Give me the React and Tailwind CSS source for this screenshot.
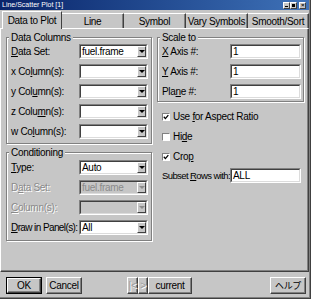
const sans = "font-['Liberation_Sans',Arial,sans-serif]";

function U({ children }) {
  return <span className="underline underline-offset-1">{children}</span>;
}

function DropButton({ disabled }) {
  return (
    <div className="flex h-full w-[9px] shrink-0 items-center justify-center border border-t-white border-l-white border-r-[#404040] border-b-[#404040] bg-[#c6c6c6]">
      <div
        className={`h-0 w-0 border-x-[3px] border-t-[3px] border-x-transparent ${
          disabled ? "border-t-[#8a8a8a]" : "border-t-black"
        }`}
      />
    </div>
  );
}

function Sunken({ value, select, disabled, width = "w-[69px]" }) {
  return (
    <div className={`h-[15px] ${width} shrink-0 border border-t-[#808080] border-l-[#808080] border-r-white border-b-white`}>
      <div
        className={`flex h-full items-center border border-t-[#404040] border-l-[#404040] border-r-[#dcdcdc] border-b-[#dcdcdc] ${
          disabled ? "bg-[#c6c6c6]" : "bg-white"
        }`}
      >
        <span
          className={`flex-1 truncate pl-px text-[10px] leading-[11px] ${
            disabled ? "text-[#8a8a8a]" : "text-black"
          }`}
        >
          {value}
        </span>
        {select ? <DropButton disabled={disabled} /> : null}
      </div>
    </div>
  );
}

function Row({ label, disabled, labelClass = "text-[10px]", children }) {
  return (
    <div className="flex h-[15px] items-center">
      <div
        className={`w-[68px] shrink-0 leading-[11px] ${labelClass} ${
          disabled ? "text-[#8a8a8a] [text-shadow:1px_1px_0_#fff]" : ""
        }`}
      >
        {label}
      </div>
      {children}
    </div>
  );
}

function Group({ title, className = "", children }) {
  return (
    <fieldset
      className={`border border-[#808080] shadow-[inset_1px_1px_0_#fff,1px_1px_0_#fff] ${className}`}
    >
      <legend className="ml-[-2px] bg-[#c6c6c6] px-[2px] text-[10px] leading-[11px]">
        {title}
      </legend>
      {children}
    </fieldset>
  );
}

function Check({ checked, children }) {
  return (
    <div className="flex h-[11px] items-center gap-[3px] text-[10px] leading-[11px]">
      <div className="flex size-[8px] items-center justify-center border border-t-[#808080] border-l-[#808080] border-r-white border-b-white bg-white">
        {checked ? (
          <svg viewBox="0 0 6 6" className="size-[6px]">
            <path d="M0.8 2.8 L2.4 4.6 L5.3 1.2" stroke="black" strokeWidth="1.3" fill="none" />
          </svg>
        ) : null}
      </div>
      <span>{children}</span>
    </div>
  );
}

function Button({ children, isDefault, disabled, width, className = "" }) {
  return (
    <div className={`h-[17px] ${width} ${isDefault ? "border border-black" : ""} ${className}`}>
      <div
        className={`flex h-full items-center justify-center border border-t-white border-l-white border-r-[#404040] border-b-[#404040] shadow-[inset_-1px_-1px_0_#808080] text-[10px] leading-[11px] ${
          disabled ? "text-[#9a9a9a] [text-shadow:1px_1px_0_#fff]" : ""
        }`}
      >
        {children}
      </div>
    </div>
  );
}

function TitleBar() {
  return (
    <div className="flex h-[10px] items-center bg-gradient-to-r from-[#0a246a] to-[#3f72b8] pl-[2px] pr-[3px]">
      <span className="flex-1 text-[7px] leading-[10px] tracking-normal text-white">Line/Scatter Plot [1]</span>
      <div className="flex items-center">
        <div className="flex h-[7px] w-[7px] items-end justify-center border border-t-white border-l-white border-r-[#404040] border-b-[#404040] bg-[#c6c6c6] pb-px">
          <div className="h-px w-[3px] bg-black" />
        </div>
        <div className="flex h-[7px] w-[7px] items-center justify-center border border-t-white border-l-white border-r-[#404040] border-b-[#404040] bg-[#c6c6c6]">
          <div className="h-[3px] w-[3px] border border-black border-t-2" />
        </div>
        <div className="ml-[2px] flex h-[7px] w-[7px] items-center justify-center border border-t-white border-l-white border-r-[#404040] border-b-[#404040] bg-[#c6c6c6] text-[6px] leading-[6px] font-bold">
          ×
        </div>
      </div>
    </div>
  );
}

const tabs = [
  { label: "Line", width: "w-[62px]" },
  { label: "Symbol", width: "w-[62px]" },
  { label: "Vary Symbols", width: "w-[62px]" },
  { label: "Smooth/Sort", width: "w-[61px]" },
];

function Tabs() {
  return (
    <div className="flex h-[18px] items-end pl-[2px]">
      <div className="relative z-10 mb-[-1px] flex h-[18px] w-[60px] items-center justify-center border-t border-l border-r border-t-white border-l-white border-r-[#404040] bg-[#c6c6c6] pb-px text-[10px] leading-[11px]">
        Data to Plot
      </div>
      {tabs.map((tab) => (
        <div
          key={tab.label}
          className={`flex h-[15px] ${tab.width} items-center justify-center border-t border-r border-t-white border-r-[#404040] shadow-[inset_-1px_0_0_#808080] text-[10px] leading-[11px]`}
        >
          {tab.label}
        </div>
      ))}
    </div>
  );
}

function Panel() {
  return (
    <div className="flex h-[244px] border border-t-white border-l-white border-r-[#404040] border-b-[#404040] pl-[5px] pt-[3px] shadow-[inset_-1px_-1px_0_#808080]">
      <div className="mr-[5px] flex w-[146px] flex-col">
        <Group title="Data Columns" className="pb-[4px] pl-[4px] pt-px">
          <div className="flex flex-col gap-[5px]">
            <Row label={<><U>D</U>ata Set:</>}>
              <Sunken value="fuel.frame" select />
            </Row>
            <Row label={<>x Co<U>l</U>umn(s):</>}>
              <Sunken select />
            </Row>
            <Row label={<>y Col<U>u</U>mn(s):</>}>
              <Sunken select />
            </Row>
            <Row label={<>z Colu<U>m</U>n(s):</>}>
              <Sunken select />
            </Row>
            <Row label={<>w Co<U>l</U>umn(s):</>}>
              <Sunken select />
            </Row>
          </div>
        </Group>
        <Group title="Conditioning" className="mt-[3px] pb-[5px] pl-[4px] pt-[2px]">
          <div className="flex flex-col gap-[5px]">
            <Row label={<><U>T</U>ype:</>}>
              <Sunken value="Auto" select />
            </Row>
            <Row disabled label={<>D<U>a</U>ta Set:</>}>
              <Sunken value="fuel.frame" select disabled />
            </Row>
            <Row disabled label={<><U>C</U>olumn(s):</>}>
              <Sunken select disabled />
            </Row>
            <Row labelClass="text-[10px] tracking-[-0.6px]" label={<><U>D</U>raw in Panel(s):</>}>
              <Sunken value="All" select />
            </Row>
          </div>
        </Group>
      </div>

      <div className="flex w-[147px] flex-col">
        <Group title="Scale to" className="pb-[2px] pl-[4px] pt-px">
          <div className="flex flex-col gap-[5px]">
            <Row label={<><U>X</U> Axis #:</>}>
              <Sunken value="1" width="w-[71px]" />
            </Row>
            <Row label={<><U>Y</U> Axis #:</>}>
              <Sunken value="1" width="w-[71px]" />
            </Row>
            <Row label={<>Pla<U>n</U>e #:</>}>
              <Sunken value="1" width="w-[71px]" />
            </Row>
          </div>
        </Group>
        <div className="mt-[9px] flex flex-col gap-[9px] pl-[5px]">
          <Check checked>
            Use <U>f</U>or Aspect Ratio
          </Check>
          <Check>
            Hi<U>d</U>e
          </Check>
          <Check checked>
            Cro<U>p</U>
          </Check>
        </div>
        <div className="mt-[6px] pl-[5px]">
          <Row labelClass="text-[9.5px] tracking-[-0.6px]" label={<>Subset <U>R</U>ows with:</>}>
            <Sunken value="ALL" width="w-[71px]" />
          </Row>
        </div>
      </div>
    </div>
  );
}

function Footer() {
  return (
    <div className="flex h-[25px] items-start pl-[6px] pr-[3px] pt-[5px]">
      <Button isDefault width="w-[36px]">OK</Button>
      <Button width="w-[36px]" className="ml-[4px]">Cancel</Button>
      <div className="ml-[45px] flex">
        <Button disabled width="w-[11px]">|&lt;</Button>
        <Button disabled width="w-[10px]">&gt;</Button>
        <Button width="w-[44px]">current</Button>
      </div>
      <Button width="w-[36px]" className="ml-auto font-['Noto_Sans_CJK_JP',sans-serif]">
        <span className="text-[9px]">ヘルプ</span>
      </Button>
    </div>
  );
}

export default function App() {
  return (
    <div
      className={`h-[299px] w-[311px] overflow-hidden whitespace-nowrap border-b border-r border-b-[#404040] border-r-[#404040] bg-[#c6c6c6] tracking-[-0.3px] text-black shadow-[inset_-1px_-1px_0_#808080] ${sans}`}
    >
      <div className="w-[309px]">
        <TitleBar />
        <Tabs />
        <Panel />
        <Footer />
      </div>
    </div>
  );
}
